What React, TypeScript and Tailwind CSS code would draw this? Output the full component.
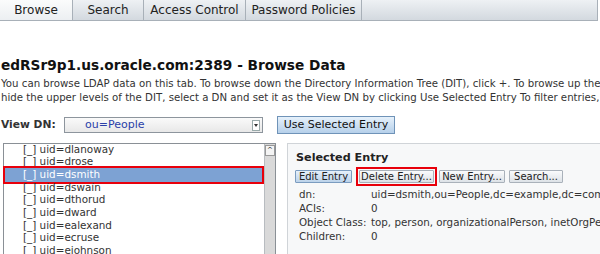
import React from "react";

const font = { fontFamily: '"DejaVu Sans", Verdana, sans-serif' };

function Btn({ children, blue, w }: { children: React.ReactNode; blue?: boolean; w: string }) {
  return (
    <div
      className={
        w +
        " h-[13px] flex items-center justify-center text-[10px] leading-none text-[#222] border rounded-[1px] whitespace-nowrap shrink-0 " +
        (blue
          ? "border-[#7b9cc0] bg-gradient-to-b from-[#e6f0fa] to-[#bcd3ea]"
          : "border-[#a9b1ba] bg-gradient-to-b from-[#fafbfc] to-[#dde2e7]")
      }
    >
      {children}
    </div>
  );
}

const rows = ["dlanoway", "drose", "dsmith", "dswain", "dthorud", "dward", "ealexand", "ecruse", "ejohnson"];

export default function App() {
  return (
    <div className="w-[600px] h-[254px] overflow-hidden bg-white text-[#222]" style={font}>
      {/* tabs */}
      <div className="flex h-[21px] border-b border-[#a8b0b8] bg-gradient-to-b from-[#eef1f4] to-[#d3d9df] mr-[2px]">
        <div className="w-[73px] flex items-center justify-center text-[12px] bg-gradient-to-b from-[#fbfcfc] to-[#eceff2] border-r border-[#a8b0b8]">Browse</div>
        <div className="w-[71px] flex items-center justify-center text-[12px] border-r border-[#a8b0b8]">Search</div>
        <div className="w-[102px] flex items-center justify-center text-[12px] border-r border-[#a8b0b8]">Access Control</div>
        <div className="w-[116px] flex items-center justify-center text-[12px] border-r border-[#a8b0b8]">Password Policies</div>
        <div className="flex-1 border-r border-[#a8b0b8]" />
      </div>

      {/* title */}
      <div className="mt-[36px] pl-[1px] text-[13.7px] font-bold leading-[16px] whitespace-nowrap text-[#111]">
        edRSr9p1.us.oracle.com:2389 - Browse Data
      </div>
      <div className="mt-[4px] pl-[1px] text-[10.2px] leading-[14px] whitespace-nowrap text-[#333]">
        <div>You can browse LDAP data on this tab. To browse down the Directory Information Tree (DIT), click +. To browse up the</div>
        <div>hide the upper levels of the DIT, select a DN and set it as the View DN by clicking Use Selected Entry To filter entries,</div>
      </div>

      {/* view dn */}
      <div className="mt-[11px] flex items-center h-[18px]">
        <div className="w-[64px] pl-[1px] text-[10.7px] font-bold text-[#333]">View DN:</div>
        <div className="w-[199px] h-[16px] border border-[#8d959d] bg-gradient-to-b from-[#fafafa] to-[#e8e8e8] flex items-center">
          <span className="ml-[20px] text-[11px] text-[#2a3fa8] flex-1">ou=People</span>
          <div className="w-[8px] h-[11px] mr-[2px] border border-[#9aa] bg-white flex items-center justify-center">
            <div className="w-0 h-0 border-l-[2px] border-r-[2px] border-t-[3px] border-l-transparent border-r-transparent border-t-[#333]" />
          </div>
        </div>
        <div className="ml-[14px] w-[118px] h-[18px] flex items-center justify-center text-[11px] text-[#111] border border-[#6f93b8] bg-gradient-to-b from-[#e6f1fb] to-[#b6d0ea]">
          Use Selected Entry
        </div>
      </div>

      {/* bottom */}
      <div className="mt-[9px] flex">
        <div className="ml-[3px] w-[273px] shrink-0 h-[120px] border border-[#8a9096] flex">
          <div className="flex-1 -mt-[1px]">
            {rows.map((r) => (
              <div
                key={r}
                className={
                  "relative h-[12.7px] flex items-center pl-[19px] text-[10.4px] whitespace-nowrap " +
                  (r === "dsmith" ? "text-white" : "text-[#333]")
                }
              >
                {r === "dsmith" && (
                  <div className="absolute -left-[1px] right-0 -top-[2px] -bottom-[3px] bg-[#7da2d3] border-2 border-[#e8000b]" />
                )}
                <span className="relative">[_] uid={r}</span>
              </div>
            ))}
          </div>
          <div className="w-[11px] border-l border-[#b8bcc0] bg-[#d9d9d9] flex flex-col items-center">
            <div className="w-[10px] h-[11px] mt-[1px] bg-[#f4f4f4] border border-[#999] flex items-center justify-center text-[7px] leading-none">^</div>
          </div>
        </div>

        <div className="ml-[11px] w-[330px] shrink-0 overflow-hidden h-[120px] border border-[#d0d4d8] bg-[#f7f8f9] pl-[7px] pt-[7px]">
          <div className="text-[11.2px] font-bold text-[#222] leading-[14px] pl-[1px]">Selected Entry</div>
          <div className="flex items-center mt-[2px]">
            <Btn blue w="w-[57px]">Edit Entry</Btn>
            <div className="ml-[4px] border-2 border-[#e8000b] p-[1px] shrink-0">
              <Btn w="w-[75px]">Delete Entry...</Btn>
            </div>
            <div className="ml-[2px]">
              <Btn w="w-[66px]">New Entry...</Btn>
            </div>
            <div className="ml-[4px]">
              <Btn w="w-[54px]">Search...</Btn>
            </div>
          </div>
          <div className="mt-[1px] pl-[4px] text-[10.3px] leading-[14px] text-[#333] whitespace-nowrap">
            {[
              ["dn:", "uid=dsmith,ou=People,dc=example,dc=com"],
              ["ACIs:", "0"],
              ["Object Class:", "top, person, organizationalPerson, inetOrgPerson"],
              ["Children:", "0"],
            ].map(([k, v]) => (
              <div key={k} className="flex">
                <div className="w-[72px] shrink-0">{k}</div>
                <div>{v}</div>
              </div>
            ))}
          </div>
        </div>
      </div>
    </div>
  );
}
